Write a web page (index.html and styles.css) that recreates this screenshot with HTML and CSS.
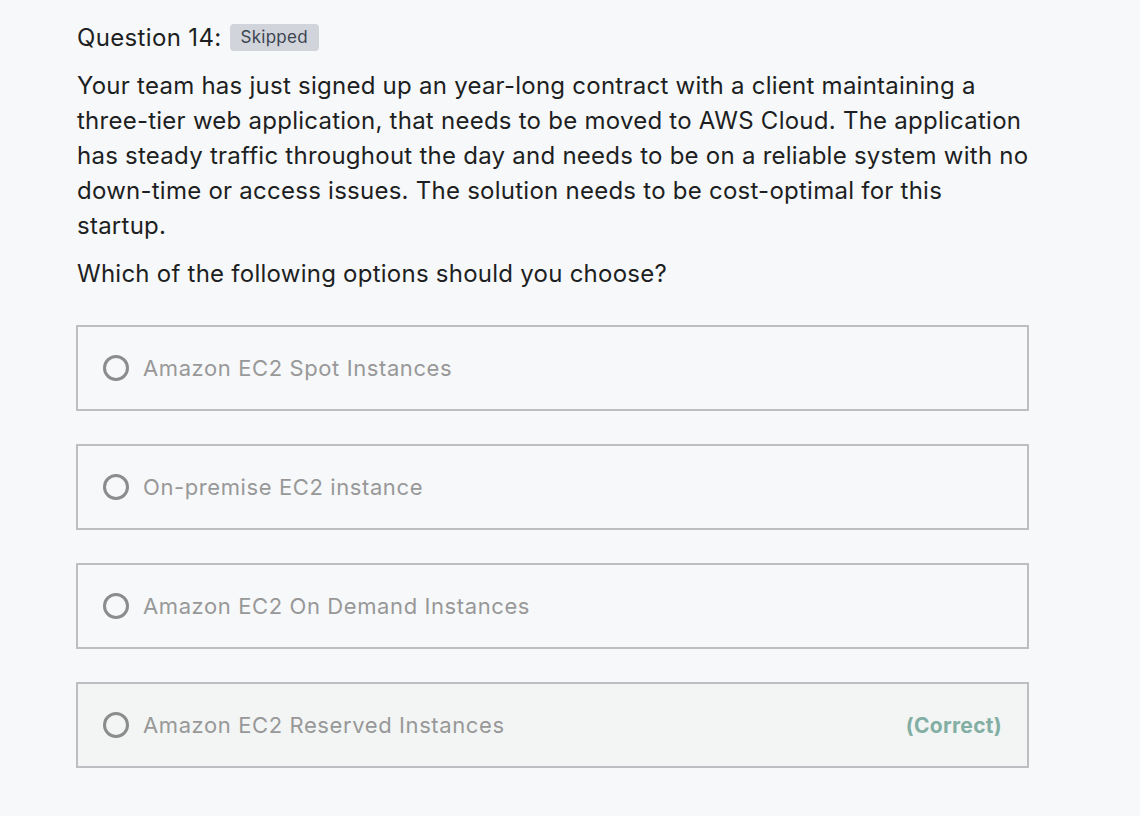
FILE: index.html
```html
<!DOCTYPE html>
<html>
<head>
<meta charset="utf-8">
<link rel="stylesheet" href="styles.css">
</head>
<body>
<div class="page">
  <div class="q-head">
    <span class="q-title">Question 14:</span>
    <span class="badge">Skipped</span>
  </div>
  <p class="q-text">Your team has just signed up an year-long contract with a client maintaining a three-tier web application, that needs to be moved to AWS Cloud. The application has steady traffic throughout the day and needs to be on a reliable system with no down-time or access issues. The solution needs to be cost-optimal for this startup.</p>
  <p class="q-prompt">Which of the following options should you choose?</p>
  <div class="options">
    <div class="option"><span class="radio"></span><span class="label">Amazon EC2 Spot Instances</span></div>
    <div class="option"><span class="radio"></span><span class="label">On-premise EC2 instance</span></div>
    <div class="option"><span class="radio"></span><span class="label">Amazon EC2 On Demand Instances</span></div>
    <div class="option correct"><span class="radio"></span><span class="label">Amazon EC2 Reserved Instances</span><span class="tag">(Correct)</span></div>
  </div>
</div>
</body>
</html>
```
FILE: styles.css
```css
html, body {
  margin: 0;
  padding: 0;
  background: #f7f8fa;
}
body {
  font-family: Inter, "Noto Sans", sans-serif;
  color: #1d1f22;
}
.page {
  padding: 18px 0 0 77px;
  width: 952px;
}
.q-head {
  display: flex;
  align-items: center;
  gap: 8px;
  height: 38px;
}
.q-title {
  font-size: 24px;
  letter-spacing: 0.35px;
}
.badge {
  background: #d1d5db;
  color: #3d4451;
  font-size: 17px;
  letter-spacing: 0.25px;
  padding: 3px 11px 4px;
  border-radius: 4px;
}
.q-text {
  margin: 12px 0 0;
  font-size: 24px;
  letter-spacing: 0.25px;
  line-height: 35px;
  width: 960px;
}
.q-prompt {
  margin: 13px 0 0;
  font-size: 24px;
  letter-spacing: 0.25px;
  line-height: 35px;
}
.options {
  display: flex;
  flex-direction: column;
  gap: 33px;
  margin-top: 34px;
  margin-left: -1px;
}
.option {
  display: flex;
  align-items: center;
  height: 86px;
  box-sizing: border-box;
  border: 2px solid #bcbec2;
  padding: 0 25px 0 25px;
  background: #f7f8fa;
}
.option.correct {
  background: #f2f5f4;
}
.radio {
  border: 3px solid #8c8c8c;
  border-radius: 50%;
  box-sizing: border-box;
  flex: none;
  width: 26px;
  height: 26px;
}
.label {
  margin-left: 14px;
  font-size: 22px;
  letter-spacing: 0.6px;
  color: #989898;
  flex: 1;
}
.tag {
  font-size: 21px;
  letter-spacing: 0.3px;
  font-weight: 700;
  color: #83aea3;
}
```
